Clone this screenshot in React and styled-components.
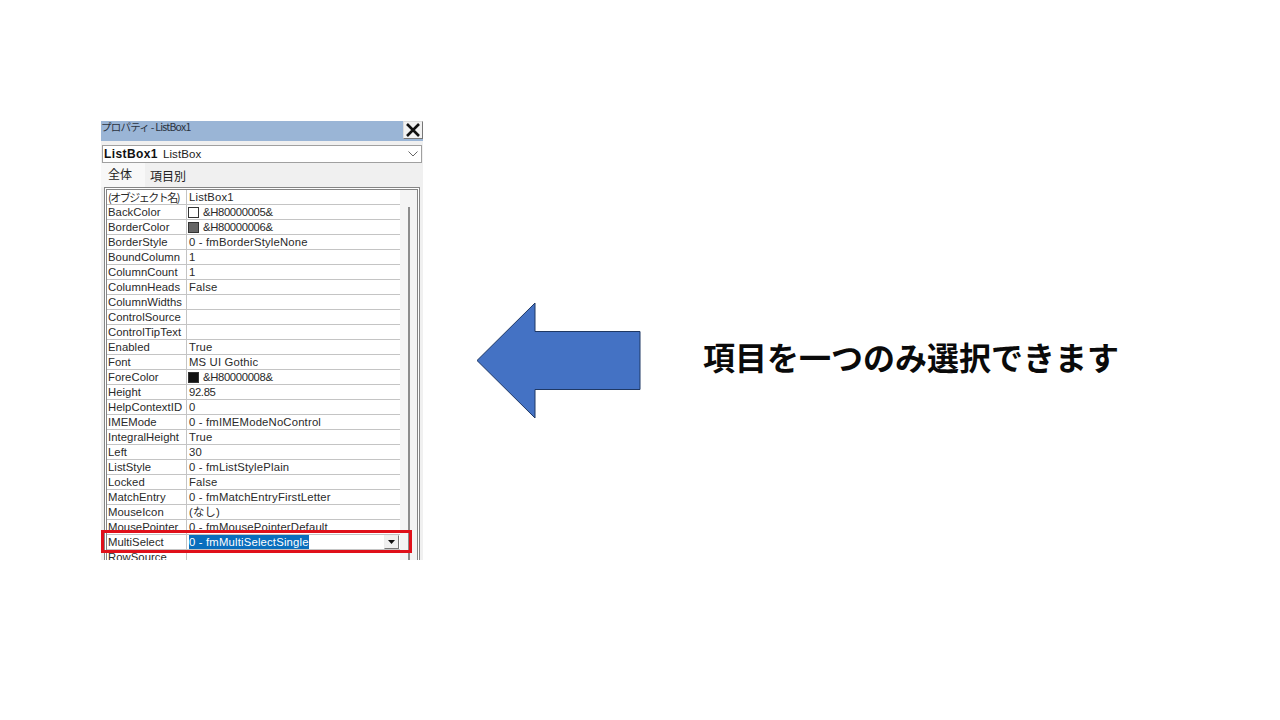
import React from 'react';
import styled, { createGlobalStyle } from 'styled-components';

const GlobalStyle = createGlobalStyle`
  html, body {
    margin: 0;
    padding: 0;
    background: #fff;
  }
`;

const Page = styled.div`
  width: 1280px;
  height: 720px;
  overflow: hidden;
  display: flex;
  align-items: flex-start;
  background: #fff;
  font-family: "Liberation Sans", "Noto Sans CJK JP", sans-serif;
`;

const Panel = styled.div`
  position: relative;
  width: 322px;
  height: 439px;
  margin: 121px 0 0 101px;
  background: #f0f0f0;
  overflow: hidden;
  flex: none;
`;

const TitleBar = styled.div`
  height: 20px;
  display: flex;
  justify-content: space-between;
  background: #9ab5d6;
  font-family: "Noto Sans CJK JP", sans-serif;
  font-size: 10.5px;
  line-height: 12px;
  letter-spacing: -0.75px;
  color: #2a3340;
`;

const CloseButton = styled.div`
  width: 20px;
  height: 18px;
  box-sizing: border-box;
  background: #f2f2f2;
  border: 1px solid #777;
  border-top-color: #ddd;
  border-left-color: #ddd;
  display: flex;
  align-items: center;
  justify-content: center;
`;

const ObjectCombo = styled.div`
  height: 18px;
  box-sizing: border-box;
  margin: 4px 1px 0 1px;
  padding: 0 1px;
  display: flex;
  align-items: center;
  gap: 5px;
  background: #fff;
  border: 1px solid #a0a0a0;
  font-size: 11.5px;
  letter-spacing: 0.1px;
  color: #222;
`;

const ObjectName = styled.b`
  font-size: 12px;
  letter-spacing: 0.4px;
  color: #111;
`;

const Chevron = styled.svg`
  margin-left: auto;
  margin-right: 2px;
`;

const Tabs = styled.div`
  height: 24px;
  display: flex;
  font-family: "Noto Sans CJK JP", sans-serif;
  font-size: 12px;
  color: #222;
`;

const Tab = styled.div`
  width: ${(p) => p.$w}px;
  padding-left: ${(p) => p.$pad}px;
  box-sizing: border-box;
  line-height: ${(p) => (p.$active ? 22 : 25)}px;
  background: ${(p) => (p.$active ? '#f8f8f8' : 'transparent')};
`;

const GridFrame = styled.div`
  margin: 0 3px;
  height: 376px;
  box-sizing: border-box;
  border: 3px double #858585;
  border-bottom: none;
  background: #fff;
  display: flex;
`;

const Rows = styled.div`
  width: 293px;
  flex: none;
`;

const Row = styled.div`
  height: 15px;
  box-sizing: border-box;
  display: grid;
  grid-template-columns: 80px 1fr;
  border-bottom: 1px solid #c4c4c4;
  font-size: 11.3px;
  line-height: 14px;
  color: #2a2a2a;
  white-space: nowrap;
`;

const NameCell = styled.div`
  padding-left: 1px;
  border-right: 1px solid #c4c4c4;
  letter-spacing: 0.05px;
  overflow: hidden;
`;

const CjkName = styled.span`
  font-family: "Noto Sans CJK JP", sans-serif;
  font-size: 11px;
  letter-spacing: -1.5px;
`;

const ValueCell = styled.div`
  padding-left: 2px;
  display: flex;
  align-items: center;
  gap: 4px;
  min-width: 0;
  letter-spacing: ${(p) => (p.$tight ? '-0.35px' : '0.18px')};
`;

const Swatch = styled.span`
  width: 11px;
  height: 11px;
  margin-left: -1px;
  flex: none;
  box-sizing: border-box;
  border: 1px solid #333;
  background: ${(p) => p.$color};
`;

const Selected = styled.span`
  background: #0a6ebd;
  color: #fff;
`;

const DropButton = styled.span`
  margin-left: auto;
  margin-right: 1px;
  width: 15px;
  height: 14px;
  flex: none;
  box-sizing: border-box;
  background: #f0f0f0;
  border: 1px solid #777;
  border-top-color: #eee;
  border-left-color: #eee;
  display: flex;
  align-items: center;
  justify-content: center;
`;

const Scrollbar = styled.div`
  flex: 1;
  display: flex;
  justify-content: center;
  padding-top: 17px;
  background: #f4f4f4;
`;

const ScrollThumb = styled.div`
  width: 2px;
  height: 100%;
  background: #8c8c8c;
`;

const Highlight = styled.div`
  position: absolute;
  left: 0;
  top: 409px;
  width: 311px;
  height: 23px;
  box-sizing: border-box;
  border: 3px solid #e0101a;
`;

const Arrow = styled.svg`
  flex: none;
  margin: 302px 0 0 53px;
`;

const Caption = styled.div`
  margin: 334px 0 0 61px;
  font-family: "Noto Sans CJK JP", sans-serif;
  font-weight: 700;
  font-size: 32px;
  line-height: 44px;
  color: #0a0a0a;
  white-space: nowrap;
`;

const rows = [
  ['BackColor', '&H80000005&', '#fff'],
  ['BorderColor', '&H80000006&', '#666'],
  ['BorderStyle', '0 - fmBorderStyleNone'],
  ['BoundColumn', '1'],
  ['ColumnCount', '1'],
  ['ColumnHeads', 'False'],
  ['ColumnWidths', ''],
  ['ControlSource', ''],
  ['ControlTipText', ''],
  ['Enabled', 'True'],
  ['Font', 'MS UI Gothic'],
  ['ForeColor', '&H80000008&', '#111'],
  ['Height', '92.85', null, true],
  ['HelpContextID', '0'],
  ['IMEMode', '0 - fmIMEModeNoControl'],
  ['IntegralHeight', 'True'],
  ['Left', '30'],
  ['ListStyle', '0 - fmListStylePlain'],
  ['Locked', 'False'],
  ['MatchEntry', '0 - fmMatchEntryFirstLetter'],
  ['MouseIcon', '(なし)'],
  ['MousePointer', '0 - fmMousePointerDefault'],
];

const App = () => (
  <Page>
    <GlobalStyle />
    <Panel>
      <TitleBar>
        <span>プロパティ - ListBox1</span>
        <CloseButton>
          <svg width="14" height="14" viewBox="0 0 14 14">
            <path d="M1 1L13 13M13 1L1 13" stroke="#111" strokeWidth="2.6" />
          </svg>
        </CloseButton>
      </TitleBar>
      <ObjectCombo>
        <ObjectName>ListBox1</ObjectName>
        <span>ListBox</span>
        <Chevron width="10" height="6" viewBox="0 0 10 6">
          <path d="M0.5 0.5L5 5L9.5 0.5" fill="none" stroke="#666" />
        </Chevron>
      </ObjectCombo>
      <Tabs>
        <Tab $w={44} $pad={7} $active>全体</Tab>
        <Tab $w={60} $pad={5}>項目別</Tab>
      </Tabs>
      <GridFrame>
        <Rows>
          <Row>
            <NameCell><CjkName>(オブジェクト名)</CjkName></NameCell>
            <ValueCell><span>ListBox1</span></ValueCell>
          </Row>
          {rows.map(([name, value, color, tight]) => (
            <Row key={name}>
              <NameCell>{name}</NameCell>
              <ValueCell $tight={Boolean(color) || tight}>
                {color && <Swatch $color={color} />}
                <span>{value}</span>
              </ValueCell>
            </Row>
          ))}
          <Row>
            <NameCell>MultiSelect</NameCell>
            <ValueCell>
              <Selected>0 - fmMultiSelectSingle</Selected>
              <DropButton>
                <svg width="7" height="4" viewBox="0 0 7 4">
                  <path d="M0 0H7L3.5 4Z" fill="#111" />
                </svg>
              </DropButton>
            </ValueCell>
          </Row>
          <Row>
            <NameCell>RowSource</NameCell>
            <ValueCell />
          </Row>
        </Rows>
        <Scrollbar>
          <ScrollThumb />
        </Scrollbar>
      </GridFrame>
      <Highlight />
    </Panel>
    <Arrow width="166" height="118" viewBox="0 0 166 118">
      <path d="M1 58.5L59 1V29.5H164V87.5H59V116Z" fill="#4472c4" stroke="#1f3864" strokeWidth="1" />
    </Arrow>
    <Caption>項目を一つのみ選択できます</Caption>
  </Page>
);

export default App;
